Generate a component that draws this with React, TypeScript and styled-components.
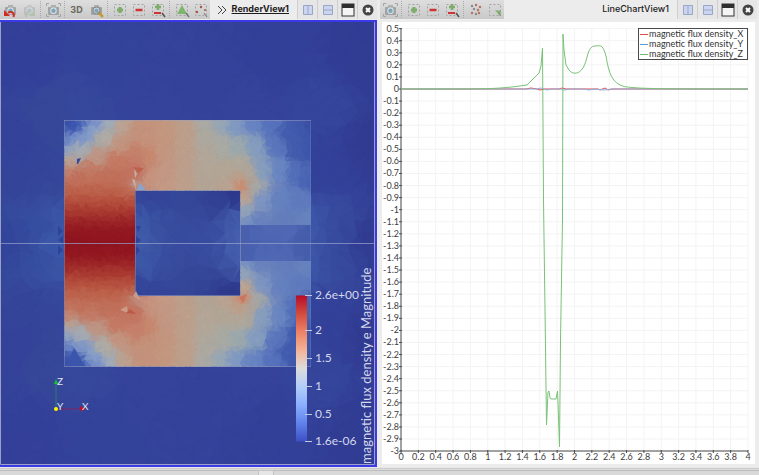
import React from "react";
import styled, { createGlobalStyle, css } from "styled-components";

const GlobalStyle = createGlobalStyle`
  * { box-sizing: border-box; }
  body { margin: 0; background: #ececec; font-family: Inter, "Liberation Sans", sans-serif; }
`;

const Window = styled.main`
  display: grid;
  grid-template-columns: 377fr 382fr;
  grid-template-rows: minmax(0, 1fr) 8px;
  height: 100vh;
  overflow: hidden;
`;

const Pane = styled.section<{ $inset?: boolean }>`
  display: flex;
  flex-direction: column;
  min-width: 0;
  min-height: 0;
  ${(p) => p.$inset && css`padding: 0 2px 3px 3px;`}
`;

const Header = styled.header`
  flex: none;
  display: flex;
  align-items: stretch;
  height: 20px;
`;

const Toolbar = styled.div`
  display: flex;
  align-items: center;
  height: 19px;
  background: linear-gradient(#dedede, #c9c9c9);
`;

const ToolButton = styled.button<{ $dim?: boolean }>`
  width: 19px;
  height: 19px;
  padding: 0;
  border: 0;
  background: none;
  display: grid;
  place-items: center;
  color: #6a6a5e;
  font: 700 9px Inter, sans-serif;
  opacity: ${(p) => (p.$dim ? 0.4 : 1)};
  svg { display: block; }
`;

const Overflow = styled(ToolButton)`
  width: 16px;
  margin-left: 4px;
`;

const Separator = styled.span`
  width: 5px;
  height: 18px;
  background: linear-gradient(90deg, transparent 2px, #aaa 2px, #aaa 3px, transparent 3px);
  mask: repeating-linear-gradient(#000 0 1px, transparent 1px 2px);
`;

const Title = styled.h2<{ $active?: boolean }>`
  flex: 1;
  margin: 0;
  padding-right: 8px;
  text-align: right;
  white-space: nowrap;
  color: #1c1c1c;
  font-size: 9px;
  font-weight: ${(p) => (p.$active ? 700 : 500)};
  line-height: 18px;
  text-decoration: ${(p) => (p.$active ? "underline" : "none")};
`;

const WindowButtons = styled.div`
  display: flex;
`;

const WindowButton = styled.button`
  width: 20px;
  height: 19px;
  padding: 0;
  border: 0;
  border-left: 1px solid #cfcfcf;
  background: #e6e6e6;
  display: grid;
  place-items: center;
  svg { display: block; }
`;

const RenderArea = styled.div`
  flex: 1;
  min-height: 0;
  border: 2px solid #3c3ae8;
  border-left: 0;
  background: #323f94;
`;

const ChartArea = styled.div`
  flex: 1;
  min-height: 0;
  margin: 2px 2px 0;
  background: #fff;
`;

const Drawing = styled.svg`
  display: block;
  width: 100%;
  height: 100%;
`;

const BarText = styled.text<{ $title?: boolean }>`
  fill: #d4d8ec;
  font: ${(p) => (p.$title ? 13 : 12)}px Lato, sans-serif;
`;

const AxisText = styled.text`
  fill: #3c3c3c;
  font: 9px Lato, sans-serif;
`;

const LegendText = styled.text`
  fill: #333;
  font: 9px Lato, sans-serif;
`;

const StatusBar = styled.footer`
  grid-column: 1 / -1;
  display: flex;
  border-top: 1px solid #e8e8e8;
  background: linear-gradient(#cbcbcb 1px, #dcdcdc 1px, #dcdcdc 2px, #bdbdbd 2px, #bdbdbd 3px, #d9d9d9 3px);
`;

const Handle = styled.div`
  width: 16px;
  height: 5px;
  margin: 2px 0 0 34%;
  background: #e6e6e6;
  border: solid #c4c4c4;
  border-width: 1px 1px 0;
`;

/* ---------- toolbar icons ---------- */

type IconName =
  | "undo" | "redo" | "camera" | "zoom" | "add" | "subtract" | "toggle"
  | "triangle" | "points" | "scatter" | "corner";

const Dashed = () => (
  <rect x="2.5" y="2.5" width="11" height="11" fill="none" stroke="#a2a2a2" strokeDasharray="2 2" />
);

const Camera = () => (
  <g>
    <rect x="3" y="5" width="11" height="8" rx="1" fill="#9fa3a4" />
    <rect x="6" y="3" width="5" height="3" fill="#adb0b1" />
    <circle cx="8.5" cy="8.8" r="3.2" fill="#dce5e9" />
    <circle cx="8.5" cy="8.8" r="2.2" fill="#7ba5bc" />
  </g>
);

const art: Record<IconName, React.ReactNode> = {
  undo: <><Camera /><path d="M11.500 15C13 11 10 9 6 10.500" fill="none" stroke="#d22b22" strokeWidth="2" /><path d="M2 8v6h6z" fill="#d22b22" /></>,
  redo: <><Camera /><path d="M5.500 15C4 11 7 9 10 10.500" fill="none" stroke="#8fb184" strokeWidth="2" /><path d="M14 8v6H8z" fill="#8fb184" /></>,
  camera: <><path d="M1.500 4V1.500H4M13 1.500h2.500V4M1.500 12v2.500H4M13 14.500h2.500V12" fill="none" stroke="#a4a4a4" /><Camera /></>,
  zoom: <><Camera /><path d="M10 10l5 5" stroke="#c49a35" strokeWidth="2.5" /><circle cx="8.5" cy="8.5" r="3.5" fill="none" stroke="#858585" /></>,
  add: <><Dashed /><path d="M8 5v6M5 8h6" stroke="#7dac6b" strokeWidth="3" /></>,
  subtract: <><Dashed /><path d="M4.500 8h7" stroke="#cf3434" strokeWidth="2.500" /></>,
  toggle: <><Dashed /><path d="M8 2v6M5 5h6" stroke="#7dac6b" strokeWidth="2.500" /><path d="M4 11h7" stroke="#cf3434" strokeWidth="2" /><path d="M12 11l3 4" stroke="#555" strokeWidth="1.500" /></>,
  triangle: <><Dashed /><path d="M8 3l5 9H3z" fill="#7eb56a" /><path d="M12 11l3 4" stroke="#777" strokeWidth="1.500" /></>,
  points: <><Dashed /><circle cx="8" cy="5" r="1.200" fill="#a65545" /><circle cx="4" cy="10" r="1.200" fill="#a65545" /><circle cx="12" cy="8" r="1" fill="#a65545" /><path d="M11 11l3 4" stroke="#777" /></>,
  scatter: <>{[[4, 4], [8, 3], [12, 5], [6, 7], [10, 8], [4, 11], [8, 12], [11, 11]].map(([x, y], i) => <circle key={i} cx={x} cy={y} r="1.2" fill={i % 3 ? "#b8705f" : "#8a8a8a"} />)}</>,
  corner: <><Dashed /><path d="M8 8l6 1-1 5z" fill="#82ac6e" /><path d="M11 11l3 3" stroke="#7a9a6b" /></>,
};

const Icon = ({ name }: { name: IconName }) => (
  <svg width="16" height="16" viewBox="0 0 16 16" aria-hidden="true">{art[name]}</svg>
);

const Tool = ({ name, label, dim }: { name: IconName; label: string; dim?: boolean }) => (
  <ToolButton type="button" aria-label={label} $dim={dim}><Icon name={name} /></ToolButton>
);

const SelectionTools = () => (
  <>
    <Tool name="add" label="Add selection" />
    <Tool name="subtract" label="Subtract selection" />
    <Tool name="toggle" label="Toggle selection" />
  </>
);

const PaneButtons = () => (
  <WindowButtons>
    <WindowButton type="button" aria-label="Split horizontal">
      <svg width="12" height="12"><path d="M1.500 1.500h9v9h-9zM6 1v10" fill="#ccd5f0" stroke="#9aa6c8" /></svg>
    </WindowButton>
    <WindowButton type="button" aria-label="Split vertical">
      <svg width="12" height="12"><path d="M1.500 1.500h9v9h-9zM1 6h10" fill="#ccd5f0" stroke="#9aa6c8" /></svg>
    </WindowButton>
    <WindowButton type="button" aria-label="Maximize">
      <svg width="14" height="14"><rect x="1" y="1" width="12" height="12" fill="#f4f4f4" stroke="#333" /><path d="M1 3h12" stroke="#2e2e2e" strokeWidth="4" /></svg>
    </WindowButton>
    <WindowButton type="button" aria-label="Close">
      <svg width="12" height="12"><circle cx="6" cy="6" r="5.5" fill="#444" /><path d="M4 4l4 4M8 4l-4 4" stroke="#fff" strokeWidth="2" /></svg>
    </WindowButton>
  </WindowButtons>
);

/* ---------- magnetic field mesh ---------- */

type Sample = [number, number, string];
type Rgb = [number, number, number];

const CENTER_Y = 243;

const leg: Sample[] = [65, 82, 100, 118, 134].flatMap((x) => [
  [x, 243, "#8f141f"], [x, 232, "#92161f"], [x, 222, "#9b2326"], [x, 213, "#a9382f"],
  [x, 203, "#b54e3c"], [x, 192, "#bd634b"], [x, 180, "#c1705a"],
] as Sample[]);

const core: Sample[] = [
  ...leg,
  [65, 122, "#3950a8"], [73, 126, "#3b54ae"], [82, 121, "#4560b7"], [95, 122, "#7890ca"], [110, 122, "#9fabb9"],
  [66, 140, "#6782c6"], [80, 138, "#7c96ca"], [92, 130, "#8aa2c8"], [66, 150, "#92a4c0"], [82, 150, "#a6acb2"],
  [105, 138, "#b0aca4"], [124, 124, "#bca28f"], [68, 161, "#b8a293"], [95, 158, "#bf9684"], [66, 170, "#c38570"],
  [92, 170, "#c37a64"], [118, 162, "#c57962"], [120, 145, "#c3947e"], [138, 155, "#c6806a"], [150, 158, "#c7886f"],
  [138, 130, "#c4927c"], [135, 172, "#c47460"], [136, 186, "#bfa095"], [150, 180, "#c7947f"], [165, 160, "#c49782"],
  [150, 140, "#c5927a"], [150, 124, "#c5937b"], [165, 145, "#c4967f"],
  [165, 130, "#c3987f"], [165, 188, "#c59a86"], [165, 175, "#c49883"],
  [185, 122, "#bd9f8b"], [185, 138, "#bd9f8b"], [185, 155, "#bd9f8b"], [185, 172, "#bd9f8b"], [185, 188, "#bd9f8b"],
  [205, 122, "#abaaa3"], [205, 138, "#aea99f"], [205, 155, "#b2a799"], [205, 172, "#b3a697"], [205, 188, "#b3a596"],
  [220, 124, "#99a7b4"], [222, 148, "#a9aaa2"],
  [225, 170, "#b2a696"], [225, 188, "#b9a392"], [235, 124, "#819ac2"], [238, 148, "#9ca9ac"], [240, 165, "#b0a89a"],
  [240, 177, "#bda08b"], [244, 187, "#cf8768"], [250, 176, "#aea69b"], [254, 188, "#a5a8a7"], [243, 197, "#bda591"],
  [244, 212, "#92a3b9"], [252, 122, "#6884c2"], [256, 148, "#859dbe"], [262, 170, "#869ebe"], [262, 200, "#7c94c2"],
  [272, 123, "#5672bc"], [276, 145, "#5b76bc"], [288, 135, "#425cae"], [300, 125, "#4159ac"], [309, 122, "#3a4fa4"],
  [300, 150, "#415bad"], [310, 150, "#3e56a9"], [280, 170, "#6a86c2"], [295, 172, "#526eb8"], [310, 180, "#4964b2"],
  [280, 200, "#6681bf"], [300, 200, "#607bbd"], [285, 222, "#647ebd"], [309, 222, "#6782be"], [258, 222, "#6982bd"],
  [246, 224, "#7690c2"],
];

const air: Sample[] = [
  [0, 22, "#343f98"], [100, 60, "#34439a"], [200, 90, "#35429a"], [370, 60, "#313c93"], [10, 140, "#344399"],
  [55, 115, "#364799"], [75, 110, "#36489c"], [10, 243, "#32459a"], [40, 220, "#364d9f"], [57, 212, "#3c57a7"],
  [58, 243, "#3b58a8"], [318, 110, "#34459b"], [330, 170, "#334199"], [372, 150, "#313b91"], [318, 230, "#3e57a8"],
  [335, 230, "#35489c"], [370, 243, "#313b92"], [55, 195, "#354699"], [138, 240, "#3f5ba8"], [144, 220, "#3d58a8"],
  [142, 194, "#324499"], [155, 196, "#334398"], [165, 222, "#384c9e"], [190, 200, "#354798"], [190, 243, "#374b9f"],
  [234, 194, "#2d3789"], [215, 200, "#324094"], [215, 230, "#384c9f"], [238, 240, "#4660ae"], [236, 222, "#435daa"],
  [30, 60, "#33409a"], [280, 60, "#334098"], [30, 180, "#344499"], [160, 110, "#35439a"], [250, 110, "#35439a"],
];

const gap: Sample[] = [
  [240, 243, "#4860ae"], [275, 243, "#4c64b2"], [311, 243, "#465dac"], [275, 228, "#5068b4"],
];

function makeRandom(seed: number) {
  let s = seed;
  return () => {
    s = (s * 1664525 + 1013904223) % 4294967296;
    return s / 4294967296;
  };
}

const toRgb = (hex: string): Rgb => [1, 3, 5].map((i) => parseInt(hex.slice(i, i + 2), 16)) as Rgb;

function colorAt(samples: [number, number, Rgb][], x: number, y: number, noise: number, soften: number) {
  const my = CENTER_Y - Math.abs(y - CENTER_Y);
  const sum = [0, 0, 0];
  let total = 0;
  for (const [sx, sy, rgb] of samples) {
    const d2 = (sx - x) ** 2 + (sy - my) ** 2 + soften;
    const w = 1 / d2 ** 3;
    total += w;
    rgb.forEach((c, i) => { sum[i] += c * w; });
  }
  return `rgb(${sum.map((c) => Math.round(c / total + noise)).join(",")})`;
}

interface Triangle { points: string; fill: string }

interface MeshOptions {
  x: number; y: number; width: number; height: number;
  cell: number; spread: number; tone: number; soften: number; seed: number;
}

function buildMesh(samples: Sample[], o: MeshOptions): Triangle[] {
  const random = makeRandom(o.seed);
  const parsed = samples.map(([x, y, c]) => [x, y, toRgb(c)] as [number, number, Rgb]);
  const cols = Math.ceil(o.width / o.cell) + 2;
  const rows = Math.ceil(o.height / o.cell) + 2;
  const nodes = Array.from({ length: rows }, (_, r) =>
    Array.from({ length: cols }, (_, c) => [
      o.x + (c - 0.5) * o.cell + (random() - 0.5) * o.cell * 0.8,
      o.y + (r - 0.5) * o.cell + (random() - 0.5) * o.cell * 0.8,
    ]));
  const out: Triangle[] = [];
  for (let r = 0; r < rows - 1; r++) {
    for (let c = 0; c < cols - 1; c++) {
      const a = nodes[r][c], b = nodes[r][c + 1], d = nodes[r + 1][c], e = nodes[r + 1][c + 1];
      const pair = random() > 0.5 ? [[a, b, d], [b, e, d]] : [[a, b, e], [a, e, d]];
      for (const tri of pair) {
        const mx = (tri[0][0] + tri[1][0] + tri[2][0]) / 3 + (random() - 0.5) * o.spread;
        const my = (tri[0][1] + tri[1][1] + tri[2][1]) / 3 + (random() - 0.5) * o.spread;
        out.push({
          points: tri.map((p) => `${p[0].toFixed(1)},${p[1].toFixed(1)}`).join(" "),
          fill: colorAt(parsed, mx, my, (random() - 0.5) * o.tone, o.soften),
        });
      }
    }
  }
  return out;
}

const airMesh = buildMesh(air, { x: 0, y: 22, width: 375, height: 444, cell: 12, spread: 6, tone: 1, soften: 400, seed: 7 });
const coreMesh = buildMesh(core, { x: 64, y: 119, width: 248, height: 248, cell: 5, spread: 3, tone: 2, soften: 60, seed: 21 });
const gapMesh = buildMesh(gap, { x: 240, y: 225, width: 71, height: 36, cell: 12, spread: 4, tone: 1, soften: 80, seed: 5 });

const Mesh = ({ triangles, clip }: { triangles: Triangle[]; clip?: string }) => (
  <g clipPath={clip}>
    {triangles.map((t, i) => <polygon key={i} points={t.points} fill={t.fill} stroke={t.fill} />)}
  </g>
);

const barLabels: [number, string][] = [
  [295, "2.6e+00"], [330, "2"], [358, "1.5"], [386, "1"], [414, "0.5"], [441, "1.6e-06"],
];

const FieldView = () => (
  <Drawing viewBox="0 22 375 443" preserveAspectRatio="xMidYMid slice" role="img" aria-label="Magnetic flux density field">
    <defs>
      <clipPath id="core-shape">
        <path clipRule="evenodd" d="M64.500 120H311V366.500H64.500zM135 190.500V296H240.500V190.500z" />
      </clipPath>
      <clipPath id="gap-shape"><rect x="240" y="225" width="71" height="36" /></clipPath>
      <linearGradient id="coolwarm" x1="0" y1="0" x2="0" y2="1">
        <stop offset="0" stopColor="#b70d28" />
        <stop offset="0.12" stopColor="#d04a3d" />
        <stop offset="0.25" stopColor="#ee8266" />
        <stop offset="0.38" stopColor="#f4b598" />
        <stop offset="0.5" stopColor="#dddcdc" />
        <stop offset="0.63" stopColor="#b0ccfa" />
        <stop offset="0.75" stopColor="#8bafff" />
        <stop offset="0.88" stopColor="#5f80ea" />
        <stop offset="1" stopColor="#3d4fc4" />
      </linearGradient>
    </defs>
    <Mesh triangles={airMesh} />
    <Mesh triangles={coreMesh} clip="url(#core-shape)" />
    <Mesh triangles={gapMesh} clip="url(#gap-shape)" />
    <g fill="#30439b">
      <path d="M58 226l5 5-5 5zM63 236v8l-5-4zM58 245l5 5-5 5z" />
      <path d="M136 226h5l-3 6zM136 236l5 4-5 5zM136 246l4 4-4 5z" />
    </g>
    <path d="M77 159l4-1-3 6h-1z" fill="#33479f" />
    <path d="M134 168l3 6-2 4zM132 179l3 1 1 10z" fill="#c5b1a6" />
    <path d="M136 190l4-7 6 7z" fill="#8aa4ca" />
    <path d="M132 167l12 1-5 5z" fill="#bd634d" />
    <path d="M120 310l7-4 1 7zM133 296l3-5 5 10z" fill="#cc9b87" />
    <path d="M130 309l6 5-10-1z" fill="#bb5846" />
    <path d="M239 297l8-3-4 9z" fill="#c8765f" />
    <path d="M74 348l11 18H66z" fill="#3c55ac" />
    <g fill="none">
      <path d="M64 120.500H311M64 366.500H311M135 190.500H240.500V296M135 295.500H240" stroke="#99a0bd" opacity="0.5" />
      <path d="M64.500 366V120M135.500 190V296" stroke="#99a0bd" opacity="0.4" />
      <path d="M310.500 120V366" stroke="#6a86c0" opacity="0.4" />
      <path d="M0 243.500H375" stroke="#9aa3cd" opacity="0.7" />
      <path d="M0.500 22V464.500H374.500V22" stroke="#9aa0c6" />
    </g>
    <rect x="296" y="295.500" width="11" height="146" fill="url(#coolwarm)" />
    {barLabels.map(([y, label]) => (
      <g key={label}>
        <path d={`M305 ${y + 0.5}H312`} stroke="#c2c8de" />
        <BarText x="315" y={y + 4}>{label}</BarText>
      </g>
    ))}
    <BarText $title transform="translate(371 464) rotate(-90)">magnetic flux density e Magnitude</BarText>
    <g fontFamily="Lato, sans-serif" fontSize="10" fill="#dfe3f5">
      <path d="M56 409V383" stroke="#2d7d70" />
      <path d="M56 409H81" stroke="#84245f" />
      <path d="M54 384l2-5 2 5z" fill="#15c522" />
      <path d="M80 406l6 3-6 2z" fill="#c41018" />
      <circle cx="56" cy="409" r="2" fill="#fff500" />
      <text x="57" y="385">Z</text>
      <text x="57" y="410">Y</text>
      <text x="82" y="410">X</text>
    </g>
  </Drawing>
);

/* ---------- line chart ---------- */

const px = (v: number) => 401 + v * 86.75;
const py = (v: number) => 89 - v * 120.7;
const tidy = (v: number) => String(Number(v.toFixed(1)));
const yTicks = Array.from({ length: 36 }, (_, i) => 0.5 - i * 0.1);
const xTicks = Array.from({ length: 21 }, (_, i) => i * 0.2);

const zSeries =
  "M401 89H470C490 89 508 88 527 85L539 73L541 66L542.500 48L543.500 200L545 310L546.500 425L548 392L549 391L550 398L551 399H556L557.500 391L558 403L559.500 447L560.500 340L562.500 220L563 34L564 50L566 65L569 70C573 75 579 74 583 68C588 60 587 46 595 46C602 45 603 46 606 56C609 74 612 83 624 86.500C638 89 670 89 748 89";

const legend = [
  { label: "magnetic flux density_X", color: "#e8494c" },
  { label: "magnetic flux density_Y", color: "#5e9cd0" },
  { label: "magnetic flux density_Z", color: "#6ebb69" },
];

const ChartView = () => (
  <Drawing viewBox="382 22 373 442" preserveAspectRatio="xMidYMid meet" role="img" aria-label="Magnetic flux density line chart">
    <g stroke="#f3f3f3">
      {yTicks.map((v) => <path key={v} d={`M401 ${py(v)}H748`} />)}
      {xTicks.map((v) => <path key={v} d={`M${px(v)} 28V451`} />)}
    </g>
    <g stroke="#4a4a4a">
      <path d="M401 28V451H748" fill="none" />
      {yTicks.map((v) => <path key={v} d={`M399 ${py(v)}H402`} />)}
      {xTicks.map((v) => <path key={v} d={`M${px(v)} 450V453`} />)}
    </g>
    {yTicks.map((v) => <AxisText key={v} x="399" y={py(v) + 3} textAnchor="end">{tidy(v)}</AxisText>)}
    {xTicks.map((v) => <AxisText key={v} x={px(v)} y="460" textAnchor="middle">{tidy(v)}</AxisText>)}
    <g fill="none">
      <path d="M401 89H526L531 88L537 89L540 90L545 89H559L562 88L566 89H598L600 90L605 88L608 90L612 89H748" stroke="#e8494c" />
      <path d="M401 89H537L541 88L547 90L552 89H561L564 90L570 89H583L589 90L595 89L604 90L612 89H748" stroke="#8fb0dc" />
      <path d={zSeries} stroke="#79c276" strokeLinejoin="round" />
    </g>
    <rect x="638.500" y="28.500" width="109" height="31" fill="#fff" stroke="#4a4a4a" />
    {legend.map((item, i) => (
      <g key={item.label}>
        <path d={`M640 ${34.5 + i * 10}H648`} stroke={item.color} />
        <LegendText x="649" y={37 + i * 10}>{item.label}</LegendText>
      </g>
    ))}
  </Drawing>
);

export default function App() {
  return (
    <>
      <GlobalStyle />
      <Window>
        <Pane aria-label="RenderView1">
          <Header>
            <Toolbar role="toolbar">
              <Tool name="undo" label="Undo camera" />
              <Tool name="redo" label="Redo camera" dim />
              <Separator />
              <Tool name="camera" label="Capture" />
              <Separator />
              <ToolButton type="button">3D</ToolButton>
              <Tool name="zoom" label="Adjust camera" />
              <Separator />
              <SelectionTools />
              <Separator />
              <Tool name="triangle" label="Select cells" />
              <Tool name="points" label="Select points" />
            </Toolbar>
            <Overflow type="button" aria-label="More tools">
              <svg width="10" height="10"><path d="M1 1l4 4-4 4M5 1l4 4-4 4" fill="none" stroke="#444" /></svg>
            </Overflow>
            <Title $active>RenderView1</Title>
            <PaneButtons />
          </Header>
          <RenderArea><FieldView /></RenderArea>
        </Pane>
        <Pane $inset aria-label="LineChartView1">
          <Header>
            <Toolbar role="toolbar">
              <Tool name="camera" label="Capture" />
              <Separator />
              <SelectionTools />
              <Separator />
              <Tool name="scatter" label="Select points" />
              <Tool name="corner" label="Select region" />
            </Toolbar>
            <Title>LineChartView1</Title>
            <PaneButtons />
          </Header>
          <ChartArea><ChartView /></ChartArea>
        </Pane>
        <StatusBar><Handle /></StatusBar>
      </Window>
    </>
  );
}
